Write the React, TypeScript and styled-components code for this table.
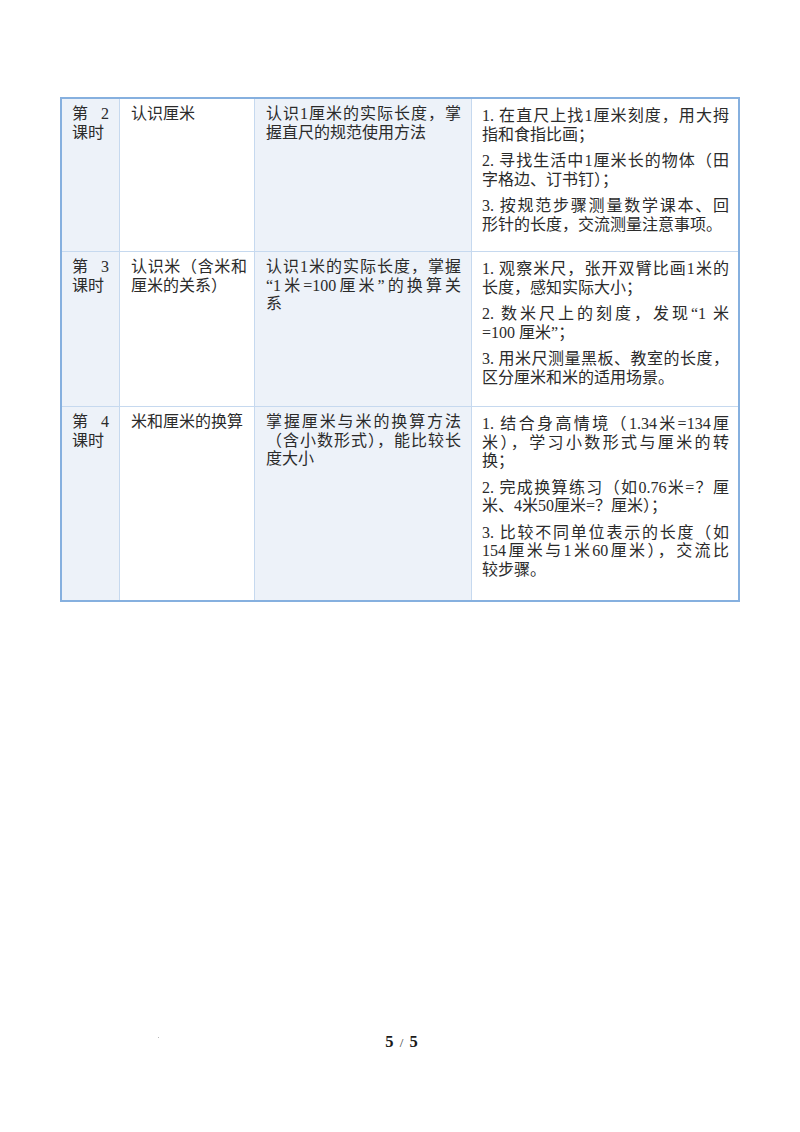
import React from "react";
import styled, { createGlobalStyle } from "styled-components";

const GlobalStyle = createGlobalStyle`
  html, body {
    margin: 0;
    padding: 0;
    background: #ffffff;
  }
  body {
    font-family: "Liberation Serif", "Noto Sans CJK SC", serif;
  }
`;

const Page = styled.div`
  width: 800px;
  min-height: 1132px;
  box-sizing: border-box;
  padding: 97px 0 0 60px;
  display: flex;
  flex-direction: column;
`;

const Table = styled.div`
  width: 680px;
  box-sizing: border-box;
  border: 2px solid #86b0df;
  display: grid;
  grid-template-columns: 58px 135px 217px 1fr;
  font-family: "Liberation Serif", "Noto Sans CJK SC", serif;
  font-size: 16px;
  line-height: 18.5px;
  color: #2b2b2b;
`;

const Cell = styled.div<{
  $tint?: boolean;
  $last?: boolean;
  $bottom?: boolean;
  $padL: number;
  $padR: number;
  $padT: number;
  $padB: number;
}>`
  box-sizing: border-box;
  background: ${(p) => (p.$tint ? "#edf2f9" : "#ffffff")};
  border-right: ${(p) => (p.$last ? "none" : "1px solid #c6d9ef")};
  border-bottom: ${(p) => (p.$bottom ? "none" : "1px solid #c6d9ef")};
  padding: ${(p) => `${p.$padT}px ${p.$padR}px ${p.$padB}px ${p.$padL}px`};
  display: flex;
  flex-direction: column;
  gap: 8px;
`;

const Para = styled.div`
  display: flex;
  flex-direction: column;
`;

const Line = styled.span<{ $justify: boolean }>`
  display: block;
  text-align: justify;
  text-align-last: ${(p) => (p.$justify ? "justify" : "start")};
`;

const Footer = styled.div`
  margin-top: 430px;
  margin-left: -60px;
  width: 800px;
  display: grid;
  grid-template-columns: 1fr auto 1fr;
  align-items: center;
  height: 20px;
`;

const Speck = styled.span`
  justify-self: start;
  margin-left: 158px;
  margin-top: -10px;
  width: 1px;
  height: 1px;
  background: #b8b8b8;
`;

const PageNum = styled.span`
  font-family: "Liberation Serif", serif;
  font-weight: 700;
  font-size: 16.5px;
  color: #1a1a1a;
  word-spacing: 2px;
  margin-left: 3px;
`;

const Slash = styled.span`
  font-weight: 400;
  font-size: 13px;
  color: #333;
`;

type Lines = string[];

function Paragraph({ lines }: { lines: Lines }) {
  return (
    <Para>
      {lines.map((l, i) => (
        <Line key={i} $justify={i < lines.length - 1}>
          {l}
        </Line>
      ))}
    </Para>
  );
}

interface RowData {
  lesson: Lines;
  topic: Lines;
  goal: Lines;
  steps: Lines[];
  padB: number;
}

const rows: RowData[] = [
  {
    lesson: ["第 2", "课时"],
    topic: ["认识厘米"],
    goal: ["认识1厘米的实际长度，掌", "握直尺的规范使用方法"],
    steps: [
      ["1. 在直尺上找1厘米刻度，用大拇", "指和食指比画；"],
      ["2. 寻找生活中1厘米长的物体（田", "字格边、订书钉）；"],
      ["3. 按规范步骤测量数学课本、回", "形针的长度，交流测量注意事项。"],
    ],
    padB: 17,
  },
  {
    lesson: ["第 3", "课时"],
    topic: ["认识米（含米和", "厘米的关系）"],
    goal: ["认识1米的实际长度，掌握", "“1米=100厘米”的换算关", "系"],
    steps: [
      ["1. 观察米尺，张开双臂比画1米的", "长度，感知实际大小；"],
      ["2. 数米尺上的刻度，发现“1 米", "=100 厘米”；"],
      ["3. 用米尺测量黑板、教室的长度，", "区分厘米和米的适用场景。"],
    ],
    padB: 19,
  },
  {
    lesson: ["第 4", "课时"],
    topic: ["米和厘米的换算"],
    goal: ["掌握厘米与米的换算方法", "（含小数形式），能比较长", "度大小"],
    steps: [
      ["1. 结合身高情境（1.34米=134厘", "米），学习小数形式与厘米的转", "换；"],
      ["2. 完成换算练习（如0.76米=？厘", "米、4米50厘米=？厘米）；"],
      ["3. 比较不同单位表示的长度（如", "154厘米与1米60厘米），交流比", "较步骤。"],
    ],
    padB: 21,
  },
];

export default function App() {
  return (
    <>
      <GlobalStyle />
      <Page lang="zh-CN">
        <Table>
          {rows.map((r, idx) => {
            const bottom = idx === rows.length - 1;
            return (
              <React.Fragment key={idx}>
                <Cell $tint $bottom={bottom} $padL={10} $padR={10} $padT={6} $padB={r.padB}>
                  <Paragraph lines={r.lesson} />
                </Cell>
                <Cell $bottom={bottom} $padL={11} $padR={7} $padT={6} $padB={r.padB}>
                  <Paragraph lines={r.topic} />
                </Cell>
                <Cell $tint $bottom={bottom} $padL={11} $padR={10} $padT={6} $padB={r.padB}>
                  <Paragraph lines={r.goal} />
                </Cell>
                <Cell $last $bottom={bottom} $padL={10} $padR={9} $padT={8} $padB={r.padB}>
                  {r.steps.map((s, i) => (
                    <Paragraph key={i} lines={s} />
                  ))}
                </Cell>
              </React.Fragment>
            );
          })}
        </Table>
        <Footer>
          <Speck />
          <PageNum>
            5 <Slash>/</Slash> 5
          </PageNum>
          <span />
        </Footer>
      </Page>
    </>
  );
}
